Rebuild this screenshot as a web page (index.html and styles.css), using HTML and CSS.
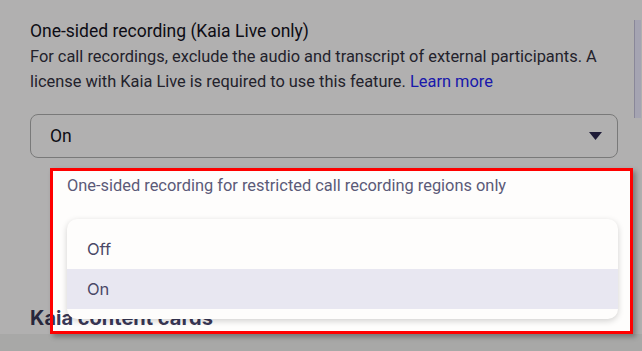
FILE: index.html
```html
<html>
<head>
	<title>Call recording settings</title>
	<meta name="viewport" content="width=device-width, initial-scale=1">
	<link rel="stylesheet" href="styles.css">
</head>
<body>
<div class="page">
	<div class="content">
		<div class="setting">
			<div class="setting-title">One-sided recording (Kaia Live only)</div>
			<p class="setting-desc">For call recordings, exclude the audio and transcript of external participants. A license with Kaia Live is required to use this feature. <a href="#" class="link">Learn more</a></p>
			<div class="select">
				<span>On</span>
				<svg class="select-arrow" width="13" height="8" viewBox="0 0 13 8"><polygon points="0,0 13,0 6.5,8"/></svg>
			</div>
			<p class="hint">One-sided recording for restricted call recording regions only</p>
		</div>
		<div class="section-title">Kaia content cards</div>
	</div>
	<div class="scrollbar"><div class="scroll-thumb"></div></div>
</div>

<div class="spotlight"></div>

<ul class="menu">
	<li class="menu-item">Off</li>
	<li class="menu-item selected">On</li>
</ul>
</body>
</html>
```

FILE: styles.css
```css
body {
	margin: 0;
	background: #f1f1f0;
	font-family: Roboto, "Liberation Sans", sans-serif;
}

.page {
	display: flex;
	height: 334px;
	background: #fefdfc;
	overflow: hidden;
}

.content {
	flex: 1;
	padding: 21px 0 0 30px;
}

.setting {
	width: 588px;
}

.setting-title {
	font-size: 17.5px;
	line-height: 20px;
	color: #141222;
}

.setting-desc {
	margin: 3px 0 0 0;
	font-size: 16.4px;
	line-height: 25px;
	color: #33313f;
}

.link {
	color: #2626f5;
	text-decoration: none;
}

.select {
	display: flex;
	align-items: center;
	justify-content: space-between;
	box-sizing: border-box;
	height: 44px;
	margin-top: 20px;
	padding: 0 15px 0 19px;
	border: 1px solid #aeaeae;
	border-radius: 8px;
	font-size: 17.5px;
	color: #141222;
}

.select-arrow {
	fill: #2b2850;
}

.hint {
	margin: 18px 0 0 37px;
	font-size: 16.4px;
	line-height: 20px;
	color: #5b5a78;
}

.section-title {
	margin-top: 110px;
	font-family: Inter, "Liberation Sans", sans-serif;
	font-weight: 700;
	font-size: 20px;
	line-height: 24px;
	color: #3a3857;
}

.scrollbar {
	width: 7px;
	margin-right: 1px;
}

.scroll-thumb {
	margin-top: 20px;
	height: 98px;
	background: #edebff;
	border-left: 1px solid #c4c2dc;
}

/* highlight frame, dims everything around it */
.spotlight {
	position: absolute;
	left: 50px;
	top: 168px;
	width: 583px;
	height: 166px;
	box-sizing: border-box;
	border: 3px solid #ff0000;
	box-shadow: 3px 3px 5px rgba(0, 0, 0, 0.3), 0 0 0 1000px rgba(0, 0, 0, 0.3);
	pointer-events: none;
}

.menu {
	position: absolute;
	left: 67px;
	top: 219px;
	width: 551px;
	margin: 0;
	padding: 10px 0;
	list-style: none;
	background: #fefdfc;
	border-radius: 10px;
	box-shadow: 0 2px 6px rgba(0, 0, 0, 0.18);
	font-family: Inter, "Liberation Sans", sans-serif;
	font-size: 16.5px;
	color: #4a4866;
}

.menu-item {
	display: flex;
	align-items: center;
	height: 40px;
	padding-left: 20px;
}

.menu-item.selected {
	background: #e8e7f1;
}
```
